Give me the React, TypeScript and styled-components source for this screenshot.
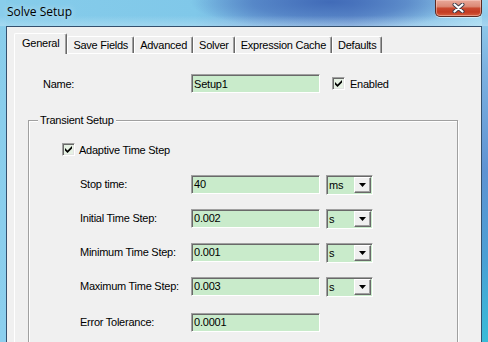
import React from "react";
import styled, { createGlobalStyle } from "styled-components";

const GlobalStyle = createGlobalStyle`
  html, body { margin: 0; padding: 0; width: 488px; height: 342px; overflow: hidden; background: #f0f0f0; }
  body { font-family: "Liberation Sans", Arial, sans-serif; font-size: 11px; color: #000; }
  *, *::before, *::after { box-sizing: border-box; }
`;

const Window = styled.div`
  width: 488px;
  height: 342px;
  overflow: hidden;
  display: flex;
  flex-direction: column;
  background:
    linear-gradient(180deg, #97d3ee 0%, #7db2e0 20%, #5f93d2 50%, #4b9fd4 75%, #38bcd8 100%) right top / 6px 100% no-repeat,
    linear-gradient(180deg, #89cdeb 0%, #8ccfee 100%) left top / 6px 100% no-repeat,
    radial-gradient(ellipse 140px 28px at 330px 2px, rgba(62, 104, 182, 0.95) 0%, rgba(66, 110, 186, 0.6) 55%, rgba(66, 110, 186, 0) 100%),
    linear-gradient(90deg, #86ccea 0%, #80c8e9 40%, #74addd 52%, #739fd6 72%, #8cc5e8 88%, #a6dcf1 100%);
`;

const TitleBar = styled.div`
  flex: none;
  height: 26px;
  display: flex;
  align-items: flex-start;
  justify-content: space-between;
  padding: 0 6px 0 7px;
  background: linear-gradient(180deg, rgba(255, 255, 255, 0) 60%, rgba(215, 238, 250, 0.35) 100%);
`;

const Title = styled.span`
  font-family: "Open Sans", "Noto Sans", sans-serif;
  font-size: 12px;
  line-height: 23px;
  color: #000;
  text-shadow: 0 0 6px rgba(255, 255, 255, 0.75);
`;

const CloseButton = styled.div`
  width: 47px;
  height: 17px;
  display: flex;
  align-items: flex-start;
  justify-content: center;
  padding-top: 3px;
  border: 1px solid #5b2a22;
  border-top: none;
  border-radius: 0 0 5px 5px;
  background: linear-gradient(180deg, #e9a899 0%, #dc8a76 40%, #c9492f 52%, #c33b22 75%, #d6603f 100%);
  box-shadow: inset 0 0 0 1px rgba(255, 220, 210, 0.45), 0 1px 0 rgba(255, 255, 255, 0.5);
`;

const Client = styled.div`
  flex: 1;
  min-height: 0;
  margin: 0 6px;
  display: flex;
  flex-direction: column;
  background: #f0f0f0;
  border: 1px solid #34506e;
  border-bottom: none;
  padding: 6px 0 0 7px;
  overflow: hidden;
`;

const TabStrip = styled.div`
  flex: none;
  height: 21px;
  display: flex;
  align-items: flex-end;
  position: relative;
  z-index: 1;
`;

const Tab = styled.div<{ $active?: boolean }>`
  height: ${(p) => (p.$active ? 21 : 17)}px;
  margin-bottom: ${(p) => (p.$active ? 0 : 1)}px;
  padding: 0 ${(p) => (p.$active ? 7 : 5)}px ${(p) => (p.$active ? 2 : 0)}px;
  display: flex;
  align-items: center;
  background: #f0f0f0;
  border-top: 1px solid #fff;
  border-left: 1px solid #fff;
  border-right: 1px solid #696969;
  box-shadow: inset -1px 0 0 #a0a0a0;
  border-radius: 2px 2px 0 0;
  letter-spacing: -0.25px;
  white-space: nowrap;
`;

const TabPage = styled.div`
  flex: 1;
  margin-top: -1px;
  margin-right: -3px;
  border-top: 1px solid #fff;
  border-left: 1px solid #fff;
  padding: 0 0 0 13px;
`;

const NameRow = styled.div`
  display: flex;
  align-items: center;
  height: 19px;
  margin-top: 20px;
  padding-left: 15px;
`;

const Label = styled.span<{ $w: number }>`
  flex: none;
  width: ${(p) => p.$w}px;
  letter-spacing: -0.25px;
  white-space: nowrap;
`;

const TextBox = styled.div`
  flex: none;
  width: 129px;
  height: 19px;
  display: flex;
  align-items: center;
  padding-left: 2px;
  background: #c9ebcb;
  border: 1px solid;
  border-color: #a0a0a0 #fff #fff #a0a0a0;
  box-shadow: inset 1px 1px 0 #696969;
  letter-spacing: -0.2px;
`;

const CheckBox = styled.span`
  flex: none;
  width: 13px;
  height: 13px;
  display: inline-flex;
  align-items: center;
  justify-content: center;
  background: #e6f2e4;
  border: 1px solid;
  border-color: #a0a0a0 #fff #fff #a0a0a0;
  box-shadow: inset 1px 1px 0 #696969, inset -1px -1px 0 #e3e3e3;
`;

const CheckLabel = styled.span<{ $gap: number }>`
  margin-left: ${(p) => p.$gap}px;
  letter-spacing: -0.25px;
  white-space: nowrap;
`;

const EnabledBox = styled.span`
  display: flex;
  align-items: center;
  margin-left: 12px;
`;

const Group = styled.fieldset`
  margin: 21px 0 0 0;
  padding: 0;
  width: 430px;
  min-width: 0;
  border: 1px solid #a0a0a0;
  box-shadow: 1px 1px 0 #fff, inset 1px 1px 0 #fff;
`;

const Legend = styled.legend`
  margin-left: 9px;
  padding: 0 2px;
  line-height: 13px;
  background: #f0f0f0;
  letter-spacing: -0.25px;
`;

const GroupBody = styled.div`
  padding: 16px 0 40px 33px;
`;

const AdaptiveRow = styled.div`
  display: flex;
  align-items: center;
  height: 13px;
`;

const Rows = styled.div`
  display: flex;
  flex-direction: column;
  gap: 14px;
  margin-top: 19px;
  padding-left: 18px;
`;

const Row = styled.div<{ $extra?: number }>`
  display: flex;
  align-items: flex-start;
  height: 20px;
  margin-top: ${(p) => p.$extra ?? 0}px;
  line-height: 19px;
`;

const Select = styled.div`
  flex: none;
  width: 47px;
  height: 20px;
  margin-left: 6px;
  display: flex;
  align-items: center;
  padding: 1px 1px 1px 2px;
  background: #c9ebcb;
  border: 1px solid;
  border-color: #a0a0a0 #fff #fff #a0a0a0;
  box-shadow: inset 1px 1px 0 #696969;
  letter-spacing: -0.2px;
  line-height: 16px;
`;

const DropButton = styled.span`
  margin-left: auto;
  flex: none;
  width: 17px;
  height: 16px;
  display: flex;
  align-items: center;
  justify-content: center;
  background: #f0f0f0;
  border: 1px solid;
  border-color: #fff #696969 #696969 #fff;
  box-shadow: inset -1px -1px 0 #a0a0a0;
`;

const CloseGlyph = () => (
  <svg width="13" height="10" viewBox="0 0 13 10">
    <path d="M2.5 1.5 L10.5 8.5 M10.5 1.5 L2.5 8.5" stroke="#3a3a48" strokeWidth="4" strokeLinecap="round" />
    <path d="M2.5 1.5 L10.5 8.5 M10.5 1.5 L2.5 8.5" stroke="#fff" strokeWidth="2.2" strokeLinecap="round" />
  </svg>
);

const CheckMark = () => (
  <svg width="7" height="7" viewBox="0 0 7 7">
    <polygon points="0,2 2.5,4.5 7,0 7,2.5 2.5,7 0,4.5" fill="#000" />
  </svg>
);

const Arrow = () => (
  <svg width="7" height="4" viewBox="0 0 7 4">
    <polygon points="0,0 7,0 3.5,4" fill="#000" />
  </svg>
);

const tabs = ["General", "Save Fields", "Advanced", "Solver", "Expression Cache", "Defaults"];

const rows = [
  { label: "Stop time:", value: "40", unit: "ms" },
  { label: "Initial Time Step:", value: "0.002", unit: "s" },
  { label: "Minimum Time Step:", value: "0.001", unit: "s" },
  { label: "Maximum Time Step:", value: "0.003", unit: "s" },
  { label: "Error Tolerance:", value: "0.0001" },
];

export default function App() {
  return (
    <>
      <GlobalStyle />
      <Window>
        <TitleBar>
          <Title>Solve Setup</Title>
          <CloseButton>
            <CloseGlyph />
          </CloseButton>
        </TitleBar>
        <Client>
          <TabStrip>
            {tabs.map((t, i) => (
              <Tab key={t} $active={i === 0}>
                {t}
              </Tab>
            ))}
          </TabStrip>
          <TabPage>
            <NameRow>
              <Label $w={148}>Name:</Label>
              <TextBox>Setup1</TextBox>
              <EnabledBox>
                <CheckBox>
                  <CheckMark />
                </CheckBox>
                <CheckLabel $gap={5}>Enabled</CheckLabel>
              </EnabledBox>
            </NameRow>
            <Group>
              <Legend>Transient Setup</Legend>
              <GroupBody>
                <AdaptiveRow>
                  <CheckBox>
                    <CheckMark />
                  </CheckBox>
                  <CheckLabel $gap={4}>Adaptive Time Step</CheckLabel>
                </AdaptiveRow>
                <Rows>
                  {rows.map((r, i) => (
                    <Row key={r.label} $extra={i === rows.length - 1 ? 2 : 0}>
                      <Label $w={111}>{r.label}</Label>
                      <TextBox>{r.value}</TextBox>
                      {r.unit && (
                        <Select>
                          {r.unit}
                          <DropButton>
                            <Arrow />
                          </DropButton>
                        </Select>
                      )}
                    </Row>
                  ))}
                </Rows>
              </GroupBody>
            </Group>
          </TabPage>
        </Client>
      </Window>
    </>
  );
}
